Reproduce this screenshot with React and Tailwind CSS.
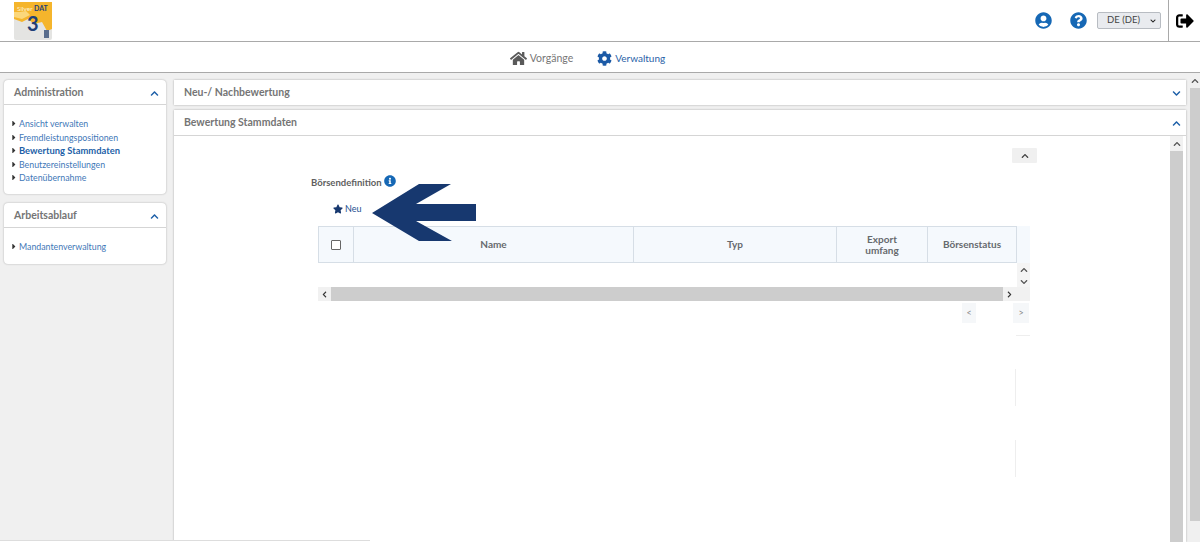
import React from "react";
import {
  FaHome,
  FaCog,
  FaUserCircle,
  FaQuestionCircle,
  FaInfoCircle,
  FaStar,
  FaSignOutAlt,
  FaCaretRight,
  FaChevronUp,
  FaChevronDown,
  FaChevronLeft,
  FaChevronRight,
} from "react-icons/fa";

function Logo() {
  return (
    <svg width="38" height="38" viewBox="0 0 38 38" className="block">
      <rect width="38" height="38" rx="2" fill="#e4e4e2" />
      <path d="M0 0H38V27L33 29L28 20L20 22L14 17L8 20L0 17Z" fill="#f5b52c" />
      <path d="M0 10L6 10L12 9L16 13L8 17L0 15Z" fill="#fbd77b" />
      <path d="M30 28H35V36H30Z" fill="#5a6d8c" />
      <text x="3" y="9" fontSize="6.5" fill="#fdf3d6" fontFamily="Lato, sans-serif">
        Silver
      </text>
      <text x="20" y="9" fontSize="7" fontWeight="700" fill="#1e3f78" fontFamily="Lato, sans-serif">
        DAT
      </text>
      <text x="13" y="29" fontSize="20" fontWeight="700" fill="#1e3f78" fontFamily="Lato, sans-serif">
        3
      </text>
    </svg>
  );
}

function SidePanel({ title, links, height }) {
  return (
    <div className={`bg-white rounded-sm shadow-[0_0_2px_rgba(0,0,0,0.3)] ${height}`}>
      <div className="h-[25px] pl-[10px] pr-[7px] pt-[2px] flex items-center justify-between border-b border-[#d5d5d5]">
        <span className="text-[10.5px] font-bold text-[#757575]">{title}</span>
        <FaChevronUp className="text-[9px] text-[#1d5fa8]" />
      </div>
      <ul className="pt-[12px] pl-[8px]">
        {links.map((l) => (
          <li
            key={l.label}
            className={`flex items-center h-[13.5px] whitespace-nowrap ${
              l.active ? "font-bold text-[9.4px] text-[#1d5fa8]" : "text-[8.8px] text-[#3f78b8]"
            }`}
          >
            <FaCaretRight className="text-[9px] text-[#333] w-[4px] mr-[3px]" />
            {l.label}
          </li>
        ))}
      </ul>
    </div>
  );
}

function AccordionHead({ title, icon }) {
  return (
    <div className="h-[25px] pl-[10px] pr-[5px] pt-[1px] flex items-center justify-between bg-white">
      <span className="text-[10.5px] font-bold text-[#757575]">{title}</span>
      {icon}
    </div>
  );
}

function Scrollbar({ className }) {
  return (
    <div className={`flex flex-col items-center bg-[#f1f1f1] ${className}`}>
      <FaChevronUp className="text-[8px] text-[#555] shrink-0" />
      <div className="w-full flex-1 bg-[#cdcdcd]" />
    </div>
  );
}

function Th({ children, className }) {
  return (
    <div
      className={`flex items-center justify-center text-center leading-[11px] text-[10px] font-bold text-[#666a6e] border-r border-[#d6dee6] ${className}`}
    >
      {children}
    </div>
  );
}

export default function App() {
  return (
    <div className="relative w-[1200px] h-[542px] overflow-hidden flex flex-col bg-[#f0f0f0] font-['Lato',sans-serif]">
      {/* HEADER */}
      <header className="h-[42px] shrink-0 bg-white border-b border-[#a9a9a9] flex items-center pl-[14px]">
        <Logo />
        <div className="ml-auto flex items-center h-full">
          <FaUserCircle className="text-[17px] text-[#1668b5]" />
          <FaQuestionCircle className="text-[17px] text-[#1668b5] ml-[18px]" />
          <div className="ml-[10px] w-[64px] h-[17px] flex items-center justify-between pl-[9px] pr-[4px] rounded-[2px] bg-[#e9ebef] border border-[#b8bcc2] text-[9.5px] text-[#444]">
            DE (DE)
            <FaChevronDown className="text-[6px] text-[#222]" />
          </div>
          <div className="ml-[7px] h-full w-[32px] border-l border-[#a9a9a9] flex items-center justify-center">
            <FaSignOutAlt className="text-[18px] text-black" />
          </div>
        </div>
      </header>

      {/* NAV */}
      <nav className="h-[31px] shrink-0 bg-white border-b border-[#a9a9a9] flex items-center justify-center pr-[25px] pt-[3px]">
        <FaHome className="text-[17px] text-[#5a5a5a]" />
        <span className="ml-[3px] text-[10.5px] text-[#777]">Vorgänge</span>
        <FaCog className="ml-[24px] text-[15px] text-[#1c5aa6]" />
        <span className="ml-[3px] text-[10px] text-[#2a62a8]">Verwaltung</span>
      </nav>

      {/* BODY */}
      <div className="flex-1 min-h-0 flex pt-[7px] pl-[4px]">
        {/* SIDEBAR */}
        <aside className="w-[162px] shrink-0 flex flex-col gap-[9px]">
          <SidePanel
            title="Administration"
            height="h-[114px]"
            links={[
              { label: "Ansicht verwalten" },
              { label: "Fremdleistungspositionen" },
              { label: "Bewertung Stammdaten", active: true },
              { label: "Benutzereinstellungen" },
              { label: "Datenübernahme" },
            ]}
          />
          <SidePanel
            title="Arbeitsablauf"
            height="h-[61px]"
            links={[{ label: "Mandantenverwaltung" }]}
          />
        </aside>

        {/* MAIN */}
        <main className="w-[1012px] ml-[8px] shrink-0 flex flex-col gap-[5px]">
          <div className="shadow-[0_0_2px_rgba(0,0,0,0.3)]">
            <AccordionHead
              title="Neu-/ Nachbewertung"
              icon={<FaChevronDown className="text-[9px] text-[#1d5fa8]" />}
            />
          </div>
          <div className="flex-1 min-h-0 flex flex-col bg-white shadow-[0_0_2px_rgba(0,0,0,0.3)]">
            <div className="border-b border-[#d5d5d5]">
              <AccordionHead
                title="Bewertung Stammdaten"
                icon={<FaChevronUp className="text-[9px] text-[#1d5fa8]" />}
              />
            </div>
            <div className="flex-1 min-h-0 flex">
              <div className="relative w-[996px] shrink-0 pt-[12px]">
                <div className="ml-[838px] w-[25px] h-[15px] flex items-center justify-center bg-[#f0f0f0] rounded-[1px]">
                  <FaChevronUp className="text-[8px] text-[#444]" />
                </div>

                <div className="ml-[137px] mt-[12px] flex items-center h-[16px]">
                  <span className="text-[9.5px] font-bold text-[#5f5f5f]">Börsendefinition</span>
                  <FaInfoCircle className="ml-[2px] -mt-[5px] text-[12px] text-[#1668b5]" />
                </div>

                <div className="ml-[159px] mt-[10px] flex items-center h-[16px] text-[9px] text-[#1d4f91]">
                  <FaStar className="text-[10px] text-[#17386f] mr-[2px]" />
                  Neu
                </div>

                {/* TABLE */}
                <div className="ml-[144px] mt-[9px] w-[712px]">
                  <div className="flex h-[37px] bg-[#f5f9fd]">
                    <div className="flex w-[699px] border border-[#d6dee6] border-r-0">
                      <Th className="w-[35px]">
                        <span className="block w-[10px] h-[10px] border border-[#666] rounded-[1px] bg-white" />
                      </Th>
                      <Th className="w-[280px]">Name</Th>
                      <Th className="w-[203px]">Typ</Th>
                      <Th className="w-[91px]">
                        Export
                        <br />
                        umfang
                      </Th>
                      <Th className="w-[89px]">Börsenstatus</Th>
                    </div>
                  </div>
                  <div className="flex justify-end h-[24px]">
                    <div className="w-[13px] bg-[#f4f4f4] flex flex-col items-center pt-[3px] gap-[4px]">
                      <FaChevronUp className="text-[8px] text-[#555]" />
                      <FaChevronDown className="text-[8px] text-[#555]" />
                    </div>
                  </div>
                  <div className="flex items-center h-[14px] bg-[#f1f1f1]">
                    <FaChevronLeft className="text-[7px] text-[#333] w-[13px] shrink-0" />
                    <div className="w-[672px] h-full bg-[#cdcdcd]" />
                    <FaChevronRight className="text-[7px] text-[#333] ml-[3px]" />
                  </div>
                  <div className="flex mt-[2px] h-[20px] text-[9px] text-[#888]">
                    <div className="ml-[644px] w-[14px] flex items-center justify-center bg-[#f5f7f9]">&lt;</div>
                    <div className="ml-[37px] w-[16px] flex items-center justify-center bg-[#f5f7f9]">&gt;</div>
                  </div>
                  <div className="ml-[698px] mt-[12px] w-[14px] h-px bg-[#eeeeee]" />
                  <div className="ml-[697px] mt-[33px] w-px h-[37px] bg-[#eeeeee]" />
                  <div className="ml-[697px] mt-[34px] w-px h-[37px] bg-[#eeeeee]" />
                </div>

                {/* ARROW */}
                <svg
                  width="105"
                  height="60"
                  viewBox="0 0 105 60"
                  className="absolute left-[198px] top-[47px]"
                >
                  <path d="M0 30L47 1H79L44 21H104V38H44L80 58H47Z" fill="#17386f" />
                </svg>
              </div>
              <Scrollbar className="w-[13px] pt-[4px] gap-[3px]" />
            </div>
          </div>
        </main>

        {/* PAGE SCROLLBAR */}
        <div className="ml-[4px] w-[10px] -mt-[3px] mb-[21px] flex flex-col items-center gap-[3px]">
          <FaChevronUp className="text-[8px] text-[#555] shrink-0" />
          <div className="w-full flex-1 bg-[#cdcdcd]" />
        </div>
      </div>

      {/* BOTTOM EDGE */}
      <div className="absolute left-0 bottom-0 w-[370px] h-[2px] bg-white border-t border-[#dddddd]" />
    </div>
  );
}
